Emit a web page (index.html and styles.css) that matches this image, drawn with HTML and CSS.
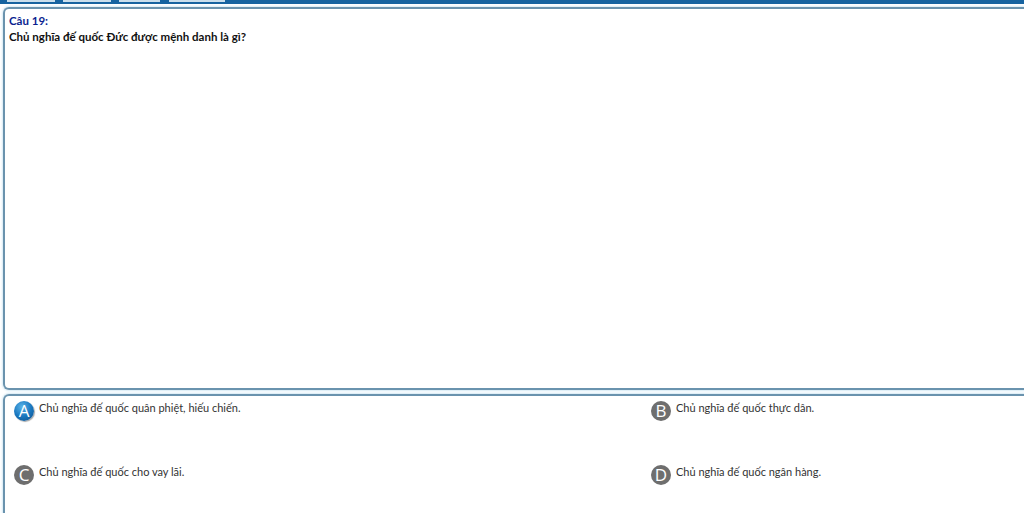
FILE: index.html
```html
<!DOCTYPE html>
<html lang="vi">
<head>
<meta charset="utf-8">
<link rel="stylesheet" href="styles.css">
</head>
<body>
<div class="topbar">
  <span class="tab t1"></span><span class="tab t2"></span><span class="tab t3"></span><span class="tab t4"></span>
</div>
<div class="page">
  <section class="question">
    <div class="qnum">Câu 19:</div>
    <div class="qtext">Chủ nghĩa đế quốc Đức được mệnh danh là gì?</div>
  </section>
  <section class="answers">
    <div class="ans"><span class="badge active">A</span><span class="atext">Chủ nghĩa đế quốc quân phiệt, hiếu chiến.</span></div>
    <div class="ans"><span class="badge">B</span><span class="atext">Chủ nghĩa đế quốc thực dân.</span></div>
    <div class="ans"><span class="badge">C</span><span class="atext">Chủ nghĩa đế quốc cho vay lãi.</span></div>
    <div class="ans"><span class="badge">D</span><span class="atext">Chủ nghĩa đế quốc ngân hàng.</span></div>
  </section>
</div>
</body>
</html>
```

FILE: styles.css
```css
html, body {
  margin: 0;
  padding: 0;
  background: #ffffff;
  overflow: hidden;
  width: 1024px;
  height: 513px;
}
body {
  font-family: "Lato", "Noto Sans", sans-serif;
}
.topbar {
  height: 4px;
  background: #1663a0;
  display: flex;
  gap: 8px;
  padding-left: 7px;
}
.tab {
  height: 2px;
  background: #c9deec;
  display: block;
}
.t1 { width: 48px; }
.t2 { width: 48px; }
.t3 { width: 41px; }
.t4 { width: 56px; margin-left: 1px; }
.page {
  padding: 3px 0 0 3px;
}
.question {
  border: 2px solid #6a93ae;
  border-right: none;
  border-radius: 6px 0 0 6px;
  box-shadow: 0 0 2px 1px #d6eaf5;
  padding: 4px 0 0 4px;
  box-sizing: border-box;
  height: 383px;
}
.qnum {
  color: #0a1f8f;
  font-weight: 700;
  font-size: 11.5px;
  line-height: 15px;
}
.qtext {
  color: #111;
  font-weight: 700;
  font-size: 11.5px;
  line-height: 15px;
  margin-top: 1px;
}
.answers {
  margin-top: 4px;
  border: 2px solid #6a93ae;
  border-right: none;
  border-bottom: none;
  border-radius: 6px 0 0 0;
  box-shadow: 0 0 2px 1px #d6eaf5;
  display: grid;
  grid-template-columns: 637px 1fr;
  grid-auto-rows: 64px;
  padding: 4px 0 0 9px;
  box-sizing: border-box;
  height: 119px;
  overflow: hidden;
}
.ans {
  display: flex;
  align-items: flex-start;
  gap: 5px;
}
.badge {
  width: 20px;
  height: 20px;
  border-radius: 50%;
  background: #6e6e6e;
  color: #fff;
  font-size: 17px;
  line-height: 20px;
  text-align: center;
  flex: none;
  margin-top: 1px;
  font-family: "Open Sans", "Noto Sans", sans-serif;
}
.badge.active {
  background: radial-gradient(circle at 40% 30%, #5ab3e8 0%, #1a78c0 50%, #0b4c86 100%);
  box-shadow: 1px 1px 1px rgba(0,0,0,0.35);
}
.atext {
  color: #333;
  font-size: 11px;
  line-height: 15px;
}
```
